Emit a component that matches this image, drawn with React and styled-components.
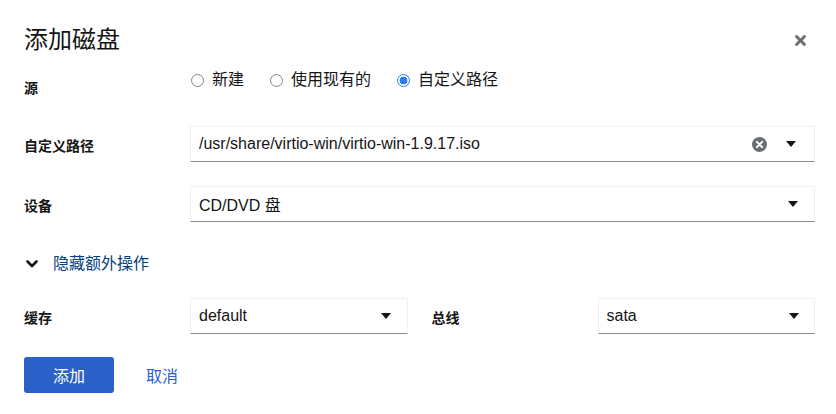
import React from "react";
import styled, { createGlobalStyle } from "styled-components";

const GlobalStyle = createGlobalStyle`
  body {
    margin: 0;
    background: #fff;
    font-family: "Liberation Sans", "Noto Sans CJK SC", sans-serif;
    color: #151515;
  }
`;

const linkBlue = "#2a60c8";

function CloseIcon() {
  return (
    <svg width="11" height="11" viewBox="0 0 352 352" fill="#6a6e73">
      <path d="M242.72 176L342.79 75.93c12.28-12.28 12.28-32.19 0-44.48L320.55 9.21c-12.28-12.28-32.19-12.28-44.48 0L176 109.28 75.93 9.21C63.65-3.07 43.74-3.070 31.45 9.21L9.21 31.45c-12.28 12.28-12.28 32.19 0 44.48L109.28 176 9.21 276.07c-12.28 12.28-12.28 32.19 0 44.48l22.24 22.24c12.28 12.28 32.2 12.28 44.48 0L176 242.72l100.07 100.07c12.28 12.28 32.2 12.28 44.48 0l22.24-22.24c12.28-12.28 12.28-32.19 0-44.48L242.72 176z" />
    </svg>
  );
}

function ClearIcon() {
  return (
    <svg width="15" height="15" viewBox="0 0 16 16">
      <circle cx="8" cy="8" r="8" fill="#6a6e73" />
      <path d="M5.2 5.2 L10.8 10.8 M10.8 5.2 L5.2 10.8" stroke="#fff" strokeWidth="2.2" strokeLinecap="round" />
    </svg>
  );
}

function Caret() {
  return (
    <svg width="10" height="6" viewBox="0 0 10 6">
      <path d="M0 0 H10 L5 6 Z" fill="#151515" />
    </svg>
  );
}

function Chevron() {
  return (
    <svg width="16" height="10" viewBox="0 0 16 10">
      <path d="M3.5 2.5 L8 7 L12.5 2.5" fill="none" stroke="#151515" strokeWidth="2.6" strokeLinecap="round" strokeLinejoin="round" />
    </svg>
  );
}

function SelectBox({ value, clearable, caretPad }) {
  return (
    <Control $caretPad={caretPad}>
      <Value>{value}</Value>
      {clearable && (
        <ClearButton>
          <ClearIcon />
        </ClearButton>
      )}
      <Caret />
    </Control>
  );
}

export default function App() {
  return (
    <>
      <GlobalStyle />
      <Modal>
        <Header>
          <Title>添加磁盘</Title>
          <CloseButton aria-label="close">
            <CloseIcon />
          </CloseButton>
        </Header>

        <Form>
          <Row $tall>
            <Label>源</Label>
            <RadioGroup>
              <RadioItem>
                <Radio type="radio" name="src" />
                <span>新建</span>
              </RadioItem>
              <RadioItem>
                <Radio type="radio" name="src" />
                <span>使用现有的</span>
              </RadioItem>
              <RadioItem>
                <Radio type="radio" name="src" defaultChecked />
                <span>自定义路径</span>
              </RadioItem>
            </RadioGroup>
          </Row>

          <Row>
            <Label>自定义路径</Label>
            <SelectBox value="/usr/share/virtio-win/virtio-win-1.9.17.iso" clearable caretPad={18} />
          </Row>

          <Row>
            <Label>设备</Label>
            <SelectBox value="CD/DVD 盘" caretPad={16} />
          </Row>
        </Form>

        <Toggle>
          <Chevron />
          <ToggleText>隐藏额外操作</ToggleText>
        </Toggle>

        <SplitRow>
          <Row>
            <Label>缓存</Label>
            <SelectBox value="default" caretPad={16} />
          </Row>
          <Row>
            <Label>总线</Label>
            <SelectBox value="sata" caretPad={15} />
          </Row>
        </SplitRow>

        <Footer>
          <PrimaryButton>添加</PrimaryButton>
          <LinkButton>取消</LinkButton>
        </Footer>
      </Modal>
    </>
  );
}

const Modal = styled.div`
  padding: 23px 21px 0 24px;
`;

const Header = styled.header`
  display: flex;
  align-items: center;
  justify-content: space-between;
`;

const Title = styled.h1`
  margin: 0;
  font-size: 24px;
  font-weight: 400;
  line-height: 31px;
  color: #151515;
`;

const CloseButton = styled.button`
  width: 30px;
  height: 30px;
  padding: 0;
  border: 0;
  background: none;
  display: flex;
  align-items: center;
  justify-content: center;
  margin-top: 2px;
`;

const Form = styled.div`
  display: flex;
  flex-direction: column;
  gap: 24px;
  margin-top: 13px;
`;

const Row = styled.div`
  display: grid;
  grid-template-columns: 150px 1fr;
  column-gap: 16px;
  align-items: start;
  min-height: ${(p) => (p.$tall ? "34px" : "36px")};
`;

const Label = styled.label`
  font-size: 14px;
  font-weight: 700;
  line-height: 21px;
  padding-top: 10px;
  color: #151515;
`;

const RadioGroup = styled.div`
  display: flex;
  align-items: center;
  height: 24px;
`;

const RadioItem = styled.label`
  display: flex;
  align-items: center;
  font-size: 16px;
  line-height: 24px;
  margin-right: 25px;
`;

const Radio = styled.input`
  appearance: none;
  box-sizing: border-box;
  width: 13px;
  height: 13px;
  margin: 0 8px 0 1px;
  border: 1px solid #858585;
  border-radius: 50%;
  background: #fff;

  &:checked {
    border-color: #2f7bf0;
    background: radial-gradient(circle, #2f7bf0 0 3.6px, #fff 4.2px);
  }
`;

const Control = styled.div`
  display: flex;
  align-items: center;
  height: 36px;
  box-sizing: border-box;
  padding: 0 ${(p) => p.$caretPad}px 0 8px;
  border: 1px solid #f0f0f0;
  border-bottom-color: #8a8d90;
  background: #fff;
`;

const Value = styled.span`
  flex: 1;
  font-size: 16px;
  color: #151515;
  white-space: nowrap;
  overflow: hidden;
`;

const ClearButton = styled.span`
  display: flex;
  margin-right: 19px;
`;

const Toggle = styled.button`
  display: flex;
  align-items: center;
  margin-top: 24px;
  padding: 6px 0;
  border: 0;
  background: none;
  font-family: inherit;
`;

const ToggleText = styled.span`
  margin-left: 13px;
  font-size: 16px;
  line-height: 24px;
  color: #004080;
`;

const SplitRow = styled.div`
  display: grid;
  grid-template-columns: 1fr 1fr;
  column-gap: 24px;
  margin-top: 16px;
`;

const Footer = styled.footer`
  display: flex;
  align-items: center;
  padding-top: 23px;
`;

const PrimaryButton = styled.button`
  width: 90px;
  height: 36px;
  border: 0;
  border-radius: 3px;
  background: ${linkBlue};
  color: #fff;
  font-family: inherit;
  font-size: 16px;
`;

const LinkButton = styled.button`
  margin-left: 16px;
  padding: 6px 16px;
  border: 0;
  background: none;
  color: ${linkBlue};
  font-family: inherit;
  font-size: 16px;
`;
